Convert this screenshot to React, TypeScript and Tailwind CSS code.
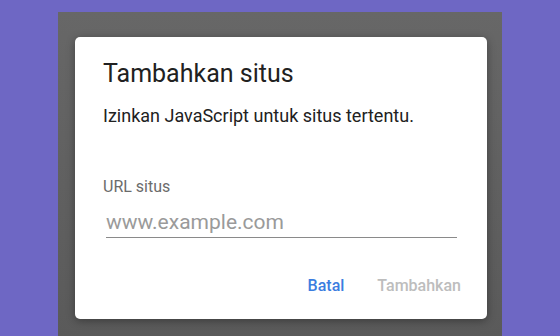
import React from "react";

export default function App() {
  return (
    <div
      className="w-[560px] h-[336px] bg-[#6e67c4] flex justify-center pt-[12px] overflow-hidden"
      style={{ fontFamily: "Roboto, 'Noto Sans', sans-serif" }}
    >
      <div className="w-[444px] h-[324px] bg-gradient-to-b from-[#676767] to-[#5a5a5a] pt-[25px] pl-[17px]">
        <div className="w-[412px] h-[282px] bg-white rounded-[5px] shadow-[0_2px_8px_rgba(0,0,0,0.35)] flex flex-col pl-[28px] pr-[28px]">
          <div className="text-[25px] leading-[30px] text-[#212121] mt-[22px]">Tambahkan situs</div>
          <div className="text-[18px] leading-[22px] text-[#212121] mt-[16px]">
            Izinkan JavaScript untuk situs tertentu.
          </div>
          <div className="text-[16px] leading-[20px] text-[#6b6b6b] mt-[50px]">URL situs</div>
          <div className="mt-[13px] ml-[3px] mr-[2px] border-b border-[#8a8a8a] pb-[3px]">
            <div className="text-[21px] leading-[24px] text-[#9a9a9a]">www.example.com</div>
          </div>
          <div className="flex justify-end gap-[33px] mt-[38px] -mr-[2px] font-medium text-[16px] leading-[20px]">
            <span className="text-[#3b7de0]">Batal</span>
            <span className="text-[#bdbdbd]">Tambahkan</span>
          </div>
        </div>
      </div>
    </div>
  );
}
